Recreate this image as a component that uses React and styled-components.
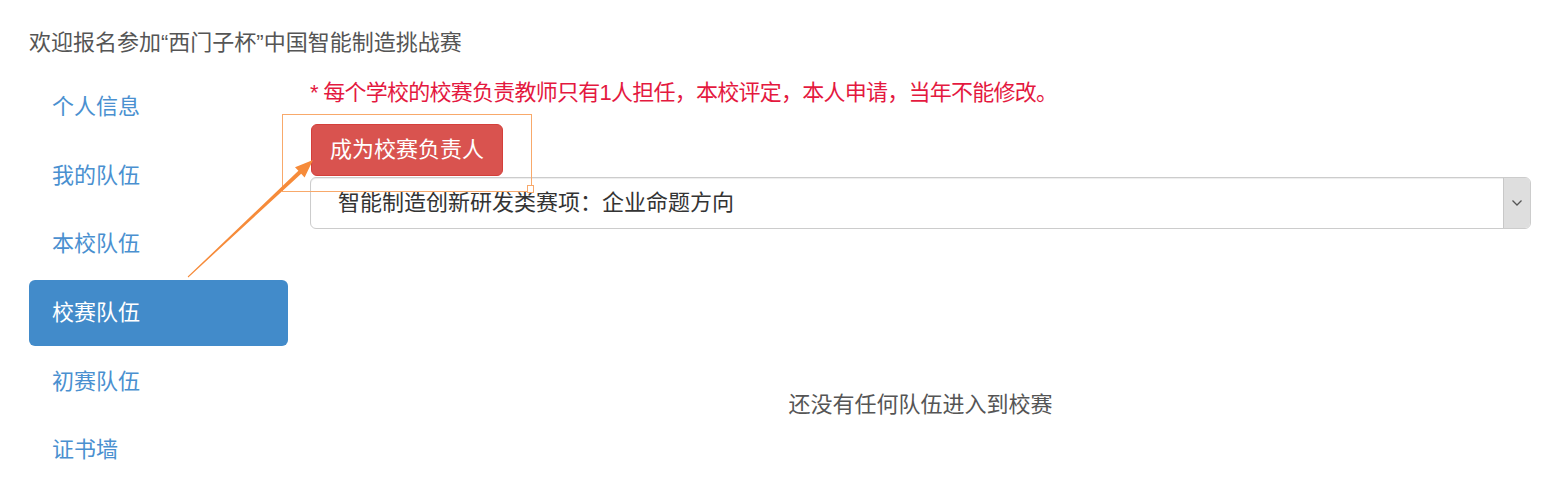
import React from 'react'
import styled, { createGlobalStyle } from 'styled-components'

const GlobalStyle = createGlobalStyle`
  html, body {
    margin: 0;
    padding: 0;
    background: #fff;
  }
  body {
    font-family: "Liberation Sans", "Noto Sans CJK SC", sans-serif;
    font-size: 22px;
    line-height: 30px;
    color: #333;
  }
`

const Page = styled.div`
  position: relative;
  width: 1541px;
  height: 497px;
  overflow: hidden;
  padding: 28px 10px 0 29px;
  box-sizing: border-box;
`

const Heading = styled.div`
  color: #555;
  line-height: 30px;
  margin-bottom: 16px;
`

const Body = styled.div`
  display: flex;
  gap: 22px;
`

const Sidebar = styled.ul`
  list-style: none;
  margin: 0;
  padding: 0;
  width: 259px;
  display: flex;
  flex-direction: column;
  gap: 2.67px;
  flex-shrink: 0;
`

const NavItem = styled.li`
  height: 66px;
  display: flex;
  align-items: center;
  padding-left: 23px;
  border-radius: 6px;
  color: ${p => (p.$active ? '#fff' : '#4a90d0')};
  background: ${p => (p.$active ? '#428bca' : 'transparent')};
`

const Main = styled.div`
  flex: 1;
  display: flex;
  flex-direction: column;
  align-items: flex-start;
  padding-top: 4px;
`

const Note = styled.div`
  color: #e4193f;
  line-height: 30px;
  letter-spacing: -0.75px;
  margin-bottom: 16px;
`

const DangerButton = styled.button`
  font-family: inherit;
  font-size: 22px;
  line-height: 30px;
  color: #fff;
  background: #d9534f;
  border: 1px solid #d43f3a;
  border-radius: 6px;
  padding: 10px 18px;
  height: 52px;
  margin-left: 1px;
  cursor: pointer;
`

const SelectBox = styled.div`
  align-self: stretch;
  margin-top: 1px;
  height: 52px;
  box-sizing: border-box;
  border: 1px solid #ccc;
  border-radius: 6px;
  display: flex;
  align-items: stretch;
  overflow: hidden;
  box-shadow: inset 0 1px 1px rgba(0, 0, 0, 0.075);
`

const SelectText = styled.div`
  flex: 1;
  display: flex;
  align-items: center;
  padding-left: 27px;
  color: #333;
`

const SelectArrow = styled.div`
  width: 26px;
  background: #dedede;
  border-left: 1px solid #c8c8c8;
  display: flex;
  align-items: center;
  justify-content: center;
`

const Empty = styled.div`
  align-self: stretch;
  text-align: center;
  color: #555;
  margin-top: 161px;
`

const Annotation = styled.svg`
  position: absolute;
  left: 0;
  top: 0;
  pointer-events: none;
`

const items = ['个人信息', '我的队伍', '本校队伍', '校赛队伍', '初赛队伍', '证书墙']

export default function App() {
  return (
    <>
      <GlobalStyle />
      <Page>
        <Heading>欢迎报名参加“西门子杯”中国智能制造挑战赛</Heading>
        <Body>
          <Sidebar>
            {items.map(t => (
              <NavItem key={t} $active={t === '校赛队伍'}>{t}</NavItem>
            ))}
          </Sidebar>
          <Main>
            <Note>* 每个学校的校赛负责教师只有1人担任，本校评定，本人申请，当年不能修改。</Note>
            <DangerButton>成为校赛负责人</DangerButton>
            <SelectBox>
              <SelectText>智能制造创新研发类赛项：企业命题方向</SelectText>
              <SelectArrow>
                <svg width="12" height="8" viewBox="0 0 12 8">
                  <path d="M1.5 1.5 L6 6 L10.5 1.5" fill="none" stroke="#555" strokeWidth="1.3" />
                </svg>
              </SelectArrow>
            </SelectBox>
            <Empty>还没有任何队伍进入到校赛</Empty>
          </Main>
        </Body>
        <Annotation width="1541" height="497" viewBox="0 0 1541 497">
          <rect x="282.5" y="114.5" width="249" height="77" fill="none" stroke="#f8a96b" strokeWidth="1" />
          <rect x="527.5" y="185.5" width="6" height="7" fill="#fff" stroke="#f8a96b" strokeWidth="1" />
          <polygon
            points="187.7,276.6 298.4,170.8 295.0,167.2 313,160 304.6,177.4 301.2,173.8 188.3,277.4"
            fill="#f68b3a"
          />
        </Annotation>
      </Page>
    </>
  )
}
